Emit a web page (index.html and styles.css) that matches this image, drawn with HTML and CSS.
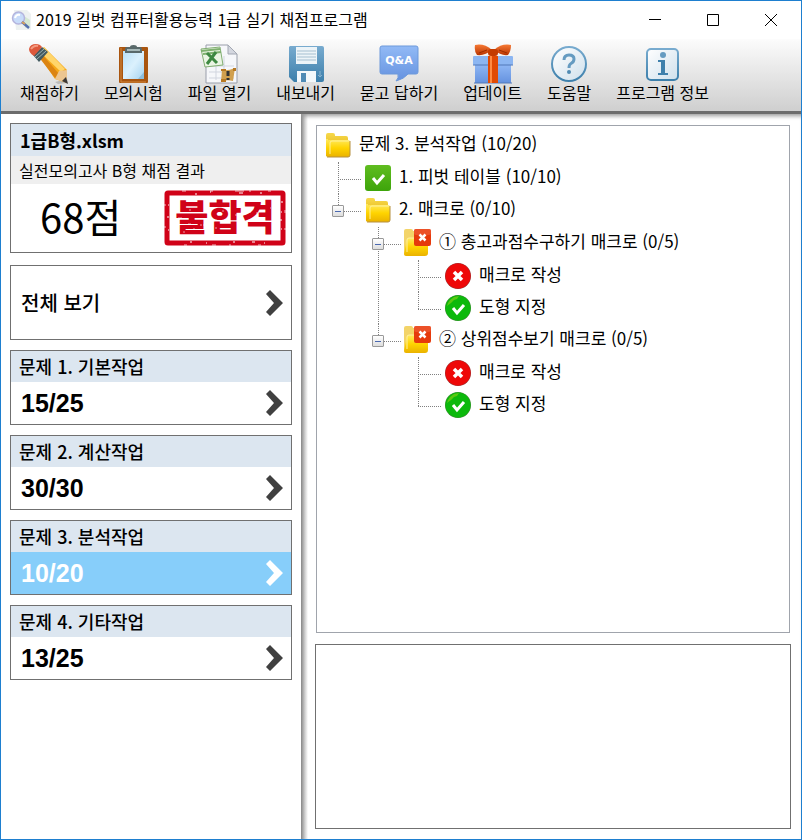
FILE: index.html
```
<!DOCTYPE html>
<html lang="ko">
<head>
    <meta charset="UTF-8">
    <meta name="viewport" content="width=device-width, initial-scale=1.0">
    <title>2019 길벗 컴퓨터활용능력 1급 실기 채점프로그램</title>
    <link rel="stylesheet" href="styles.css">
</head>
<body>
    <!-- shared gradients and icons -->
    <svg class="defs" width="0" height="0" aria-hidden="true">
        <defs>
            <linearGradient id="gold" x1="0" y1="0" x2="0" y2="1"><stop offset="0" stop-color="#ffea62"/><stop offset="0.5" stop-color="#ffd400"/><stop offset="1" stop-color="#eab200"/></linearGradient>
            <linearGradient id="gold-back" x1="0" y1="0" x2="0" y2="1"><stop offset="0" stop-color="#f6d94c"/><stop offset="1" stop-color="#e2a900"/></linearGradient>
            <linearGradient id="steel" x1="0" y1="0" x2="0" y2="1"><stop offset="0" stop-color="#78abcf"/><stop offset="1" stop-color="#3c7fab"/></linearGradient>
            <linearGradient id="bubble" x1="0" y1="0" x2="0" y2="1"><stop offset="0" stop-color="#92baf6"/><stop offset="1" stop-color="#6592df"/></linearGradient>
            <linearGradient id="glass" x1="0" y1="0" x2="1" y2="1"><stop offset="0" stop-color="#fff"/><stop offset="1" stop-color="#cfe0ec"/></linearGradient>
            <linearGradient id="paper" x1="0" y1="0" x2="1" y2="1"><stop offset="0" stop-color="#b8dff5"/><stop offset="0.5" stop-color="#dbf1fd"/><stop offset="1" stop-color="#a5d2ef"/></linearGradient>
            <linearGradient id="orange" x1="0" y1="0" x2="0" y2="1"><stop offset="0" stop-color="#f77a35"/><stop offset="1" stop-color="#b93400"/></linearGradient>
            <linearGradient id="green" x1="0" y1="0" x2="0" y2="1"><stop offset="0" stop-color="#60bd20"/><stop offset="1" stop-color="#3da40a"/></linearGradient>
        </defs>
        <symbol id="folder" viewBox="0 0 26 26">
            <path d="M1 3q0-2 2-2h5q2 0 2 2v1h11q2 0 2 2v18H1z" fill="url(#gold-back)"/>
            <path d="M3 9q0-1 1-1h19q2 0 2 2v13q0 2-2 2H3q-2 0-2-2V7h2z" fill="url(#gold)"/>
            <path d="M5 22V11q0-2 2-2h17" fill="none" stroke="#fff09a"/>
            <path d="M25 9v14q0 2-2 2H2" fill="none" stroke="#b69040"/>
        </symbol>
        <symbol id="folder-fail" viewBox="0 0 26 26" overflow="visible">
            <path d="M-1 1q0-2 2-2h5q2 0 2 2h13v22q0 2-2 2H1q-2 0-2-2z" fill="#f3d469"/>
            <path d="M2 9q0-1 1-1h20v15q0 3-3 3H1q-2 0-2-2z" fill="url(#gold)"/>
            <path d="M2 22V10q0-2 2-2h7" fill="none" stroke="#fff0a2"/>
            <rect x="9" y="-1" width="17" height="17" rx="2" fill="#e63a0c"/>
            <rect x="9" y="-1" width="17" height="6" rx="2" fill="#f0603c" opacity="0.6"/>
            <path d="M14.500 4.500l6 6m0-6l-6 6" stroke="#fff" stroke-width="2.500"/>
        </symbol>
        <symbol id="check-box" viewBox="0 0 26 26">
            <rect width="26" height="26" rx="3" fill="url(#green)"/>
            <path d="M8 13l4 5 7-8" fill="none" stroke="#fff" stroke-width="3"/>
        </symbol>
        <symbol id="fail-circle" viewBox="0 0 26 26">
            <circle cx="13" cy="13" r="13" fill="#9c3030"/>
            <circle cx="13" cy="13" r="12.500" fill="#ee0808"/>
            <path d="M9 9l8 8m0-8l-8 8" stroke="#fff" stroke-width="3.500"/>
        </symbol>
        <symbol id="check-circle" viewBox="0 0 26 26">
            <circle cx="13" cy="13" r="13" fill="#3b8a30"/>
            <circle cx="13" cy="13" r="12.500" fill="#0cb90c"/>
            <path d="M3 8l2-3 4-3 5-1-2 3-3 1-3 3-4 3z" fill="#5bc812"/>
            <path d="M8 13l4 5 7-8" fill="none" stroke="#fff" stroke-width="3"/>
        </symbol>
        <symbol id="chevron" viewBox="0 0 18 26">
            <path d="M5 0l13 13L5 26l-4-4 8-9-8-9z" fill="currentColor"/>
        </symbol>
    </svg>

    <div class="window">
        <header class="titlebar">
            <svg class="app-icon" width="20" height="20" viewBox="0 0 20 20" aria-hidden="true">
                <path d="M3 0h13l4 4v16H5z" fill="#edf1f1"/>
                <path d="M13 6l6 4v6l-5 2z" fill="#d5e8d2"/>
                <circle cx="7.500" cy="8" r="6" fill="#c8dcfa" stroke="#b4b4dd" stroke-width="1.500"/>
                <path d="M4 8q1-4 5-3" fill="none" stroke="#fff" stroke-width="2"/>
                <path d="M11 12l7 6" stroke="#5470ae" stroke-width="2.500"/>
                <path d="M11 12l3 2" stroke="#d7a05d" stroke-width="2"/>
            </svg>
            <h1>2019 길벗 컴퓨터활용능력 1급 실기 채점프로그램</h1>
            <div class="window-buttons">
                <button type="button" aria-label="최소화"><svg width="12" height="12"><path d="M0 5.500h12" stroke="#000"/></svg></button>
                <button type="button" aria-label="최대화"><svg width="12" height="12"><path d="M.5.5h11v11H.5z" fill="none" stroke="#000"/></svg></button>
                <button type="button" aria-label="닫기"><svg width="12" height="12"><path d="M0 0l12 12M12 0L0 12" stroke="#000"/></svg></button>
            </div>
        </header>

        <nav class="toolbar">
            <button type="button">
                <svg width="40" height="40" viewBox="0 0 40 40" aria-hidden="true">
                    <path d="M26 38l12-3 1 4-10 1z" fill="#bbb"/>
                    <path d="M9 10l6-7 23 23v13l-12-4z" fill="#f6a818"/>
                    <path d="M11 8l4-5 21 22-4 3z" fill="#ffd56a"/>
                    <path d="M9 12l3-3 18 21-4 4z" fill="#dc8411"/>
                    <path d="M26 35l4-8 8-1v13z" fill="#edc691"/>
                    <path d="M33 37l4-4 2 7z" fill="#3c3836"/>
                    <path d="M4 11l9-8 6 5-9 10z" fill="#445b60"/>
                    <path d="M6 13l9-8m-7 10l9-8" stroke="#9eb3b3"/>
                    <path d="M0 5q1-5 7-5 4 0 6 3l-8 9q-5-3-5-7z" fill="#dd583b"/>
                    <path d="M2 5q3-4 7-3" fill="none" stroke="#f49a7f" stroke-width="2"/>
                </svg>
                <span>채점하기</span>
            </button>
            <button type="button">
                <svg width="40" height="40" viewBox="0 0 40 40" aria-hidden="true">
                    <rect x="6" y="3" width="29" height="36" rx="1" fill="#a9550f"/>
                    <path d="M8 4v34h25" fill="none" stroke="#d28a41"/>
                    <rect x="10" y="7" width="21" height="28" fill="url(#paper)"/>
                    <path d="M25 35l6-7v7z" fill="#8dbedc"/>
                    <path d="M12 9V5q0-2 2-2h3q0-2 3.500-2T24 3h3q2 0 2 2v4z" fill="#59696a"/>
                    <path d="M14 6h13" stroke="#a7b9b9" stroke-width="2"/>
                </svg>
                <span>모의시험</span>
            </button>
            <button type="button">
                <svg width="40" height="40" viewBox="0 0 40 40" aria-hidden="true">
                    <path d="M7 1h22l9 9v29H7z" fill="#f6f7fa" stroke="#999eaa"/>
                    <path d="M29 1v9h9z" fill="#d4d7df" stroke="#a2a7b2"/>
                    <path d="M10 22h25M10 28h25M10 34h25M17 12v24M25 12v24" stroke="#d1d5df"/>
                    <path d="M2 5l19-2 3 18-18 2z" fill="#eaf5e3" stroke="#82ae72"/>
                    <path d="M2 7l19-2M4 10l18-2" stroke="#7eb06e" stroke-width="2"/>
                    <path d="M8 9l10 10M17 8L8 20" stroke="#3e8841" stroke-width="3"/>
                    <path d="M23 26q6 1 13-2l-2 13q-7-2-12 1z" fill="#d1a04e"/>
                    <path d="M22 25h5v2h-5zm0 10h5v3h-5zm12-11h3v3h-3z" fill="#b77923"/>
                    <path d="M29 27v5m0 2v2" stroke="#333" stroke-width="3"/>
                </svg>
                <span>파일 열기</span>
            </button>
            <button type="button">
                <svg width="40" height="40" viewBox="0 0 40 40" aria-hidden="true">
                    <path d="M4 2h32q2 0 2 2v32q0 2-2 2H8l-5-5V3z" fill="url(#steel)"/>
                    <rect x="10" y="3" width="21" height="17" fill="#edf4f8"/>
                    <path d="M11 7h19M11 10h19M11 13h19M11 16h19" stroke="#a5bfd0"/>
                    <rect x="11" y="27" width="19" height="11" fill="#f3f8fb"/>
                    <rect x="15" y="29" width="5" height="9" fill="#4f8bb5"/>
                    <path d="M34 27v6m-2-2l2 2 2-2" fill="none" stroke="#8ab3cf"/>
                </svg>
                <span>내보내기</span>
            </button>
            <button type="button">
                <svg width="40" height="40" viewBox="0 0 40 40" aria-hidden="true">
                    <path d="M3 2h34q2 0 2 2v24q0 2-2 2h-8q-4 5-12 7 3-3 2-7H3q-2 0-2-2V4q0-2 2-2z" fill="url(#bubble)" stroke="#6d99db"/>
                    <text class="qa-text" x="20" y="20" text-anchor="middle">Q&amp;A</text>
                </svg>
                <span>묻고 답하기</span>
            </button>
            <button type="button">
                <svg width="40" height="40" viewBox="0 0 40 40" aria-hidden="true">
                    <path d="M2 19h36v20H2z" fill="url(#bubble)"/>
                    <rect x="0" y="12" width="40" height="9" rx="1" fill="#8cb6f2"/>
                    <path d="M0 21h40M1 39h38" stroke="#5179b9"/>
                    <path d="M15 12h10v27H15z" fill="#e14a04"/>
                    <path d="M18 12v27" stroke="#ff8b43" stroke-width="2"/>
                    <path d="M19 6Q11-1 2 1q-1 6 2 10 8 1 15-5z" fill="url(#orange)"/>
                    <path d="M21 6q8-7 17-5 0 6-3 10-7 1-14-5z" fill="url(#orange)"/>
                    <path d="M6 9l8-3m20 3l-8-3" stroke="#9e2e00"/>
                    <rect x="15" y="5" width="10" height="7" rx="3" fill="#c43c00"/>
                </svg>
                <span>업데이트</span>
            </button>
            <button type="button">
                <svg width="40" height="40" viewBox="0 0 40 40" aria-hidden="true">
                    <circle cx="20" cy="20" r="17" fill="url(#glass)" stroke="url(#steel)" stroke-width="2"/>
                    <path d="M15 16q0-5 5-5t5 4q0 3-3 4.500-2 1-2 4.500" fill="none" stroke="#659bc1" stroke-width="3"/>
                    <circle cx="20" cy="28" r="2" fill="#508bb3"/>
                </svg>
                <span>도움말</span>
            </button>
            <button type="button">
                <svg width="40" height="40" viewBox="0 0 40 40" aria-hidden="true">
                    <rect x="4" y="5" width="31" height="31" rx="4" fill="url(#glass)" stroke="url(#steel)" stroke-width="2"/>
                    <circle cx="20" cy="11" r="3" fill="#659bc1"/>
                    <path d="M15 16h7v13h3v2H15v-2h3V18h-3z" fill="#3f80ac"/>
                </svg>
                <span>프로그램 정보</span>
            </button>
        </nav>

        <div class="content">
            <aside class="sidebar">
                <section class="card result">
                    <h2>1급B형.xlsm</h2>
                    <p class="exam">실전모의고사 B형 채점 결과</p>
                    <div class="verdict">
                        <span class="total">68점</span>
                        <svg class="stamp" width="122" height="56" viewBox="0 0 122 56">
                            <rect x="3" y="3" width="116" height="50" rx="1" fill="none" stroke="#d00218" stroke-width="5"/>
                            <text x="61" y="41" text-anchor="middle">불합격</text>
                            <g fill="none" stroke="#fff">
                                <path d="M18 1h4m24 0h3m22 0h9m5 0h2m17 0h3M20 55h3m25 0h4m13 0h2m27 0h3M1 14v2m0 20v2m120-18v3m0 15v2" opacity="0.700"/>
                                <path d="M4 15h1m-2 12h2m-1 13h1m112-28h2m-2 10h1m-2 8h2m-1 9h1M31 4h2m13-2h1m28 1h4m17 0h2M26 52h2m14 1h1m26-1h2m17 0h3m9 1h1"/>
                                <path d="M12 17h1m12 3h2m9 15h2m-9 4h2m-12 3h2m18-7h2m10 3h2m5-17h2m3 11h1m7-7h2m7 10h2m10-12h2m5 5h2m-15 12h2m10 3h2M77 40h2M14 28h4m6 6h3m57-12h3m19-4h1m-62 0h2" opacity="0.600"/>
                            </g>
                        </svg>
                    </div>
                </section>
                <button type="button" class="card view-all">
                    <span>전체 보기</span>
                    <svg class="chevron" aria-hidden="true"><use href="#chevron"/></svg>
                </button>
                <button type="button" class="card section">
                    <span class="name">문제 1. 기본작업</span>
                    <span class="score">15/25 <svg class="chevron" aria-hidden="true"><use href="#chevron"/></svg></span>
                </button>
                <button type="button" class="card section">
                    <span class="name">문제 2. 계산작업</span>
                    <span class="score">30/30 <svg class="chevron" aria-hidden="true"><use href="#chevron"/></svg></span>
                </button>
                <button type="button" class="card section active">
                    <span class="name">문제 3. 분석작업</span>
                    <span class="score">10/20 <svg class="chevron" aria-hidden="true"><use href="#chevron"/></svg></span>
                </button>
                <button type="button" class="card section">
                    <span class="name">문제 4. 기타작업</span>
                    <span class="score">13/25 <svg class="chevron" aria-hidden="true"><use href="#chevron"/></svg></span>
                </button>
            </aside>

            <main class="detail">
                <div class="tree">
                    <div class="row"><svg><use href="#folder"/></svg><span>문제 3. 분석작업 (10/20)</span></div>
                    <ul>
                        <li>
                            <div class="row"><svg><use href="#check-box"/></svg><span>1. 피벗 테이블 (10/10)</span></div>
                        </li>
                        <li>
                            <button type="button" class="toggle" aria-label="접기"></button>
                            <div class="row"><svg><use href="#folder"/></svg><span>2. 매크로 (0/10)</span></div>
                            <ul>
                                <li>
                                    <button type="button" class="toggle" aria-label="접기"></button>
                                    <div class="row"><svg><use href="#folder-fail"/></svg><span>① 총고과점수구하기 매크로 (0/5)</span></div>
                                    <ul>
                                        <li><div class="row"><svg><use href="#fail-circle"/></svg><span>매크로 작성</span></div></li>
                                        <li><div class="row"><svg><use href="#check-circle"/></svg><span>도형 지정</span></div></li>
                                    </ul>
                                </li>
                                <li>
                                    <button type="button" class="toggle" aria-label="접기"></button>
                                    <div class="row"><svg><use href="#folder-fail"/></svg><span>② 상위점수보기 매크로 (0/5)</span></div>
                                    <ul>
                                        <li><div class="row"><svg><use href="#fail-circle"/></svg><span>매크로 작성</span></div></li>
                                        <li><div class="row"><svg><use href="#check-circle"/></svg><span>도형 지정</span></div></li>
                                    </ul>
                                </li>
                            </ul>
                        </li>
                    </ul>
                </div>
                <textarea class="notes" aria-label="설명" readonly></textarea>
            </main>
        </div>
    </div>
</body>
</html>
```
FILE: styles.css
```
* { box-sizing: border-box; }
body { margin: 0; background: #fff; color: #000; font-family: "Noto Sans CJK KR", "Liberation Sans", sans-serif; font-size: 16px; }
button { margin: 0; padding: 0; border: none; background: none; color: inherit; font-family: inherit; cursor: pointer; }
svg { display: block; flex: none; }
.defs { position: absolute; }

.window { display: flex; flex-direction: column; min-height: 100vh; margin-right: 10px; border: 1px solid #1e7fcf; }

.titlebar { display: flex; align-items: center; height: 38px; padding-left: 10px; }
.titlebar h1 { flex: 1; margin: 0 0 0 5px; padding-bottom: 2px; font-size: 16px; font-weight: 400; line-height: 24px; white-space: nowrap; }
.window-buttons { display: flex; margin-right: 1px; }
.window-buttons button { display: flex; align-items: center; justify-content: center; width: 58px; height: 38px; }

.toolbar { display: flex; gap: 25px; height: 75px; padding: 5px 19px 0; background: linear-gradient(#fcfcfc, #cfcfcf); border-bottom: 3px solid #6c6c6c; }
.toolbar button { display: flex; flex-direction: column; align-items: center; font-size: 16px; line-height: 16px; white-space: nowrap; }
.qa-text { fill: #fff; font-family: "DejaVu Sans", sans-serif; font-size: 11px; font-weight: 700; }

.content { display: flex; flex: 1; }
.sidebar { display: flex; flex-direction: column; gap: 10px; width: 300px; padding: 9px; }
.card { width: 100%; border: 1px solid #707070; background: #fff; text-align: left; }
.result { margin-bottom: 2px; }
.result h2 { margin: 0; padding: 0 9px; background: #dce6f0; font-size: 18px; font-weight: 700; line-height: 32px; }
.exam { margin: 0; padding: 0 8px; background: #efefef; font-size: 16px; line-height: 28px; }
.verdict { display: flex; align-items: center; justify-content: space-between; height: 68px; padding: 0 5px 0 29px; }
.total { padding-bottom: 4px; font-size: 40px; line-height: 60px; }
.stamp { overflow: visible; }
.stamp text { fill: #d00218; font-size: 36px; font-weight: 900; }
.chevron { width: 18px; height: 26px; color: #404040; }
.view-all { display: flex; align-items: center; justify-content: space-between; height: 75px; padding: 0 8px 0 10px; font-size: 20px; font-weight: 500; }
.section .name { display: block; padding-left: 8px; background: #dce6f0; font-size: 18px; font-weight: 500; line-height: 31px; }
.section .score { display: flex; align-items: center; justify-content: space-between; height: 42px; padding: 0 8px 0 10px; font-family: "Liberation Sans", Arial, sans-serif; font-size: 25px; font-weight: 700; }
.active .score { background: #87cefa; color: #fff; }
.active .chevron { color: #fff; }

.detail { display: flex; flex: 1; flex-direction: column; gap: 11px; min-width: 0; padding: 11px 10px 10px 14px; background: linear-gradient(90deg, #858585, #d0d0d0 4px, #fff 7px); box-shadow: inset 0 5px 4px -3px #999; }
.tree { flex: 1; margin: 0 1px; padding: 3px 0 0 8px; border: 1px solid #a0a4ac; background: #fff; }
.tree ul { margin: 0 0 0 13px; padding: 1px 0 0; list-style: none; }
.tree li { position: relative; padding-left: 27px; }
/* dotted branch lines */
.tree li::before { content: ""; position: absolute; top: 0; left: 0; height: 100%; border-left: 1px dotted #808080; }
.tree li:last-child::before { height: 17px; }
.tree li::after { content: ""; position: absolute; top: 17px; left: 0; width: 23px; border-top: 1px dotted #808080; }
.row { display: flex; align-items: center; gap: 8px; height: 32px; font-size: 17px; line-height: 24px; white-space: nowrap; }
.row svg { width: 26px; height: 26px; overflow: visible; }
.row span { padding-bottom: 5px; }
.toggle { position: absolute; z-index: 1; top: 11px; left: -6px; width: 12px; height: 12px; border: 1px solid #999; border-radius: 1px; background: linear-gradient(#4a68b0, #4a68b0) center / 6px 1px no-repeat, linear-gradient(#fff, #ddd); }
.notes { display: block; width: 100%; height: 185px; border: 1px solid #707070; background: #fff; resize: none; outline: none; }
```
